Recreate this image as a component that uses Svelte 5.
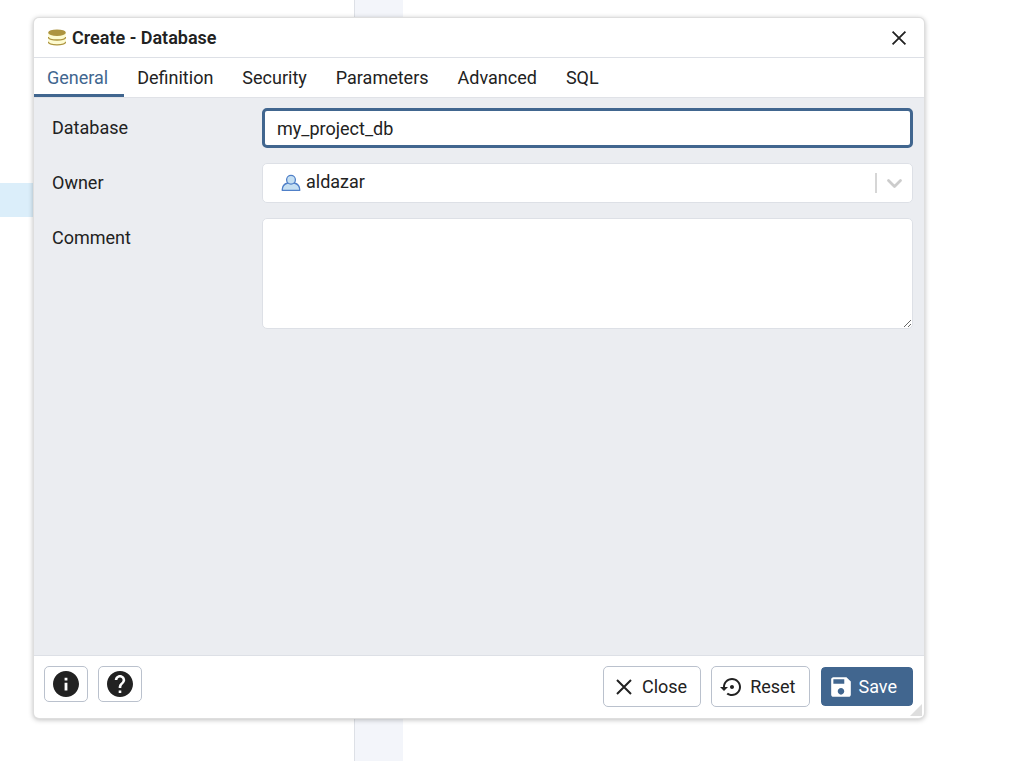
<script lang="ts">
  const tabs = ['General', 'Definition', 'Security', 'Parameters', 'Advanced', 'SQL']

  let activeTab = $state('General')
  let database = $state('my_project_db')
  let owner = $state('aldazar')
  let comment = $state('')

  function reset() {
    database = 'my_project_db'
    owner = 'aldazar'
    comment = ''
  }
</script>

{#snippet cross()}
  <svg class="cross" viewBox="0 0 24 24" aria-hidden="true">
    <path d="M5 5 19 19M19 5 5 19" fill="none" stroke="currentColor" stroke-width="2" />
  </svg>
{/snippet}

<div class="workspace">
  <aside class="tree">
    <div class="tree-row"></div>
  </aside>
  <div class="gutter"></div>

  <div class="dialog" role="dialog" aria-labelledby="dialog-title">
    <header>
      <svg class="db-icon" viewBox="0 0 18 17" aria-hidden="true">
        <path d="M0.3 3.5v9.8c0 1.7 3.8 3 8.7 3s8.7-1.3 8.7-3V3.5z" fill="#fdfbd0" />
        <path d="M0.3 12.8c0 1.7 3.8 3 8.7 3s8.7-1.3 8.7-3" fill="none" stroke="#ad9440" stroke-width="1.3" />
        <path d="M0.3 8c0 1.7 3.8 3 8.7 3s8.7-1.3 8.7-3" fill="none" stroke="#ad9440" stroke-width="1.3" />
        <ellipse cx="9" cy="3.7" rx="8.8" ry="3.3" fill="#ad9440" />
      </svg>
      <h1 id="dialog-title">Create - Database</h1>
      <button class="dismiss" type="button" aria-label="Close dialog">{@render cross()}</button>
    </header>

    <div class="tabs" role="tablist">
      {#each tabs as tab}
        <button
          type="button"
          role="tab"
          aria-selected={activeTab === tab}
          class:active={activeTab === tab}
          onclick={() => (activeTab = tab)}>{tab}</button>
      {/each}
    </div>

    <form id="database-form" onsubmit={(e) => e.preventDefault()}>
      <label for="database">Database</label>
      <input id="database" class="focused" type="text" autocomplete="off" spellcheck="false" bind:value={database} />

      <label for="owner">Owner</label>
      <div class="select">
        <select id="owner" bind:value={owner}>
          <option value="aldazar">aldazar</option>
        </select>
        <svg class="user-icon" viewBox="0 0 20 18" aria-hidden="true">
          <path d="M1.2 16.3c0-4 2.6-6.6 5.4-7.3h6.8c2.8.7 5.4 3.3 5.4 7.3z" fill="#c5dff2" stroke="#5080c8" stroke-width="1.3" stroke-linejoin="round" />
          <circle cx="10" cy="5.8" r="4.4" fill="#c5dff2" stroke="#5080c8" stroke-width="1.3" />
        </svg>
        <svg class="chevron" viewBox="0 0 38 20" aria-hidden="true">
          <path d="M1 0v20" fill="none" stroke="#d6d6d6" stroke-width="2" />
          <path d="M13.5 7.5 19.5 13.5 25.5 7.5" fill="none" stroke="#cccccc" stroke-width="2.8" stroke-linecap="round" stroke-linejoin="round" />
        </svg>
      </div>

      <label for="comment">Comment</label>
      <textarea id="comment" bind:value={comment}></textarea>
    </form>

    <footer>
      <button class="icon-button" type="button" aria-label="Information">
        <svg viewBox="0 0 24 24" aria-hidden="true">
          <path d="M12 0C5.4 0 0 5.4 0 12s5.4 12 12 12 12-5.4 12-12S18.6 0 12 0zm1.3 18h-2.6v-7.2h2.6V18zm0-9.2h-2.6V6.2h2.6v2.6z" fill="currentColor" />
        </svg>
      </button>
      <button class="icon-button" type="button" aria-label="Help">
        <svg viewBox="2 2 20 20" aria-hidden="true">
          <path d="M12 2C6.48 2 2 6.48 2 12s4.48 10 10 10 10-4.48 10-10S17.52 2 12 2zm1 17h-2v-2h2v2zm2.07-7.75-.9.92C13.45 12.9 13 13.5 13 15h-2v-.5c0-1.1.45-2.1 1.17-2.83l1.24-1.26c.37-.36.59-.86.59-1.41 0-1.1-.9-2-2-2s-2 .9-2 2H8c0-2.21 1.79-4 4-4s4 1.79 4 4c0 .88-.36 1.68-.93 2.25z" fill="currentColor" />
        </svg>
      </button>

      <div class="actions">
        <button type="button">{@render cross()}Close</button>
        <button type="button" onclick={reset}>
          <svg viewBox="0 0 24 24" aria-hidden="true">
            <path d="M14 12c0-1.1-.9-2-2-2s-2 .9-2 2 .9 2 2 2 2-.9 2-2zm-2-9c-4.97 0-9 4.03-9 9H0l4 4 4-4H5c0-3.87 3.13-7 7-7s7 3.13 7 7-3.13 7-7 7c-1.51 0-2.91-.49-4.06-1.3l-1.42 1.44C8.04 20.3 9.94 21 12 21c4.97 0 9-4.03 9-9s-4.03-9-9-9z" fill="currentColor" />
          </svg>
          Reset
        </button>
        <button class="primary" type="submit" form="database-form">
          <svg viewBox="1 1 22 22" aria-hidden="true">
            <path d="M17 3H5c-1.11 0-2 .9-2 2v14c0 1.1.89 2 2 2h14c1.1 0 2-.9 2-2V7l-4-4zm-5 16c-1.66 0-3-1.34-3-3s1.34-3 3-3 3 1.34 3 3-1.34 3-3 3zm3-10H5V5h10v4z" fill="currentColor" />
          </svg>
          Save
        </button>
      </div>
    </footer>
    <span class="resize-corner"></span>
  </div>
</div>

<style>
  :global(body) {
    margin: 0;
    background: #fff;
  }

  .workspace {
    position: relative;
    display: flex;
    min-height: 100vh;
    font-family: Roboto, sans-serif;
    font-size: 18px;
    line-height: 24px;
    color: #222;
  }

  .workspace * {
    box-sizing: border-box;
  }

  .tree {
    width: 355px;
    padding-top: 183px;
    border-right: 1px solid #dde0e6;
  }

  .tree-row {
    height: 34px;
    background: #dbeefa;
  }

  .gutter {
    width: 48px;
    background: #f3f5fa;
  }

  .dialog {
    position: absolute;
    top: 18px;
    right: 100px;
    bottom: 43px;
    left: 34px;
    display: flex;
    flex-direction: column;
    min-width: 640px;
    overflow: hidden;
    background: #fff;
    border-radius: 5px;
    box-shadow: 0 0 0 1px #dedede, 0 1px 5px 1px rgba(0, 0, 0, 0.25);
  }

  header {
    display: flex;
    align-items: center;
    height: 40px;
    padding: 0 14px;
    border-bottom: 1px solid #dde0e6;
  }

  h1 {
    flex: 1;
    margin: 0;
    font-size: 18px;
    font-weight: 600;
  }

  .db-icon {
    width: 18px;
    height: 17px;
    margin-right: 6px;
  }

  button {
    padding: 0;
    border: none;
    background: none;
    color: inherit;
    font: inherit;
    cursor: pointer;
  }

  .dismiss {
    display: flex;
  }

  .dismiss .cross {
    width: 22px;
    height: 22px;
  }

  .tabs {
    display: flex;
    height: 40px;
    border-bottom: 1px solid #e0e2e7;
  }

  .tabs button {
    padding: 4px 16px 0 13px;
    border-bottom: 3px solid transparent;
  }

  .tabs .active {
    border-color: #41668f;
    color: #41668f;
  }

  form {
    flex: 1;
    display: grid;
    grid-template-columns: 195px 1fr;
    align-content: start;
    gap: 15px;
    padding: 10px 11px 15px 18px;
    background: #ebedf1;
  }

  label {
    padding-top: 8px;
  }

  input,
  select,
  textarea {
    display: block;
    width: 100%;
    margin: 0;
    border: 1px solid #dde0e6;
    border-radius: 5px;
    outline: none;
    background: #fff;
    color: inherit;
    font: inherit;
  }

  input {
    height: 40px;
    padding: 0 14px;
  }

  input.focused,
  input:focus {
    border: 3px solid #41668f;
    padding: 0 12px;
  }

  select {
    height: 40px;
    padding: 0 43px 2px;
    appearance: none;
  }

  textarea {
    height: 111px;
    padding: 8px 14px;
    resize: vertical;
  }

  .select {
    position: relative;
  }

  .select svg {
    position: absolute;
    pointer-events: none;
  }

  .user-icon {
    top: 11px;
    left: 19px;
    width: 20px;
    height: 18px;
  }

  .chevron {
    top: 10px;
    right: 0;
    width: 38px;
    height: 20px;
  }

  footer {
    display: flex;
    align-items: flex-start;
    gap: 10px;
    padding: 10px 10px 11px;
    border-top: 1px solid #dde0e6;
  }

  .icon-button {
    display: flex;
    align-items: center;
    justify-content: center;
    width: 44px;
    height: 36px;
    border: 1px solid #bac1cd;
    border-radius: 5px;
  }

  .icon-button svg {
    width: 26px;
    height: 26px;
  }

  .actions {
    display: flex;
    gap: 10px;
    margin-left: auto;
  }

  .actions button {
    display: flex;
    align-items: center;
    gap: 6px;
    height: 41px;
    padding: 0 13px 0 8px;
    border: 1px solid #bac1cd;
    border-radius: 5px;
  }

  .actions svg {
    width: 24px;
    height: 24px;
  }

  .actions .primary {
    padding-right: 16px;
    border-color: #fff;
    background: #41668f;
    background-clip: padding-box;
    color: #fff;
  }

  .resize-corner {
    position: absolute;
    right: 2px;
    bottom: 2px;
    border: 6px solid;
    border-color: transparent #dedede #dedede transparent;
  }
</style>
